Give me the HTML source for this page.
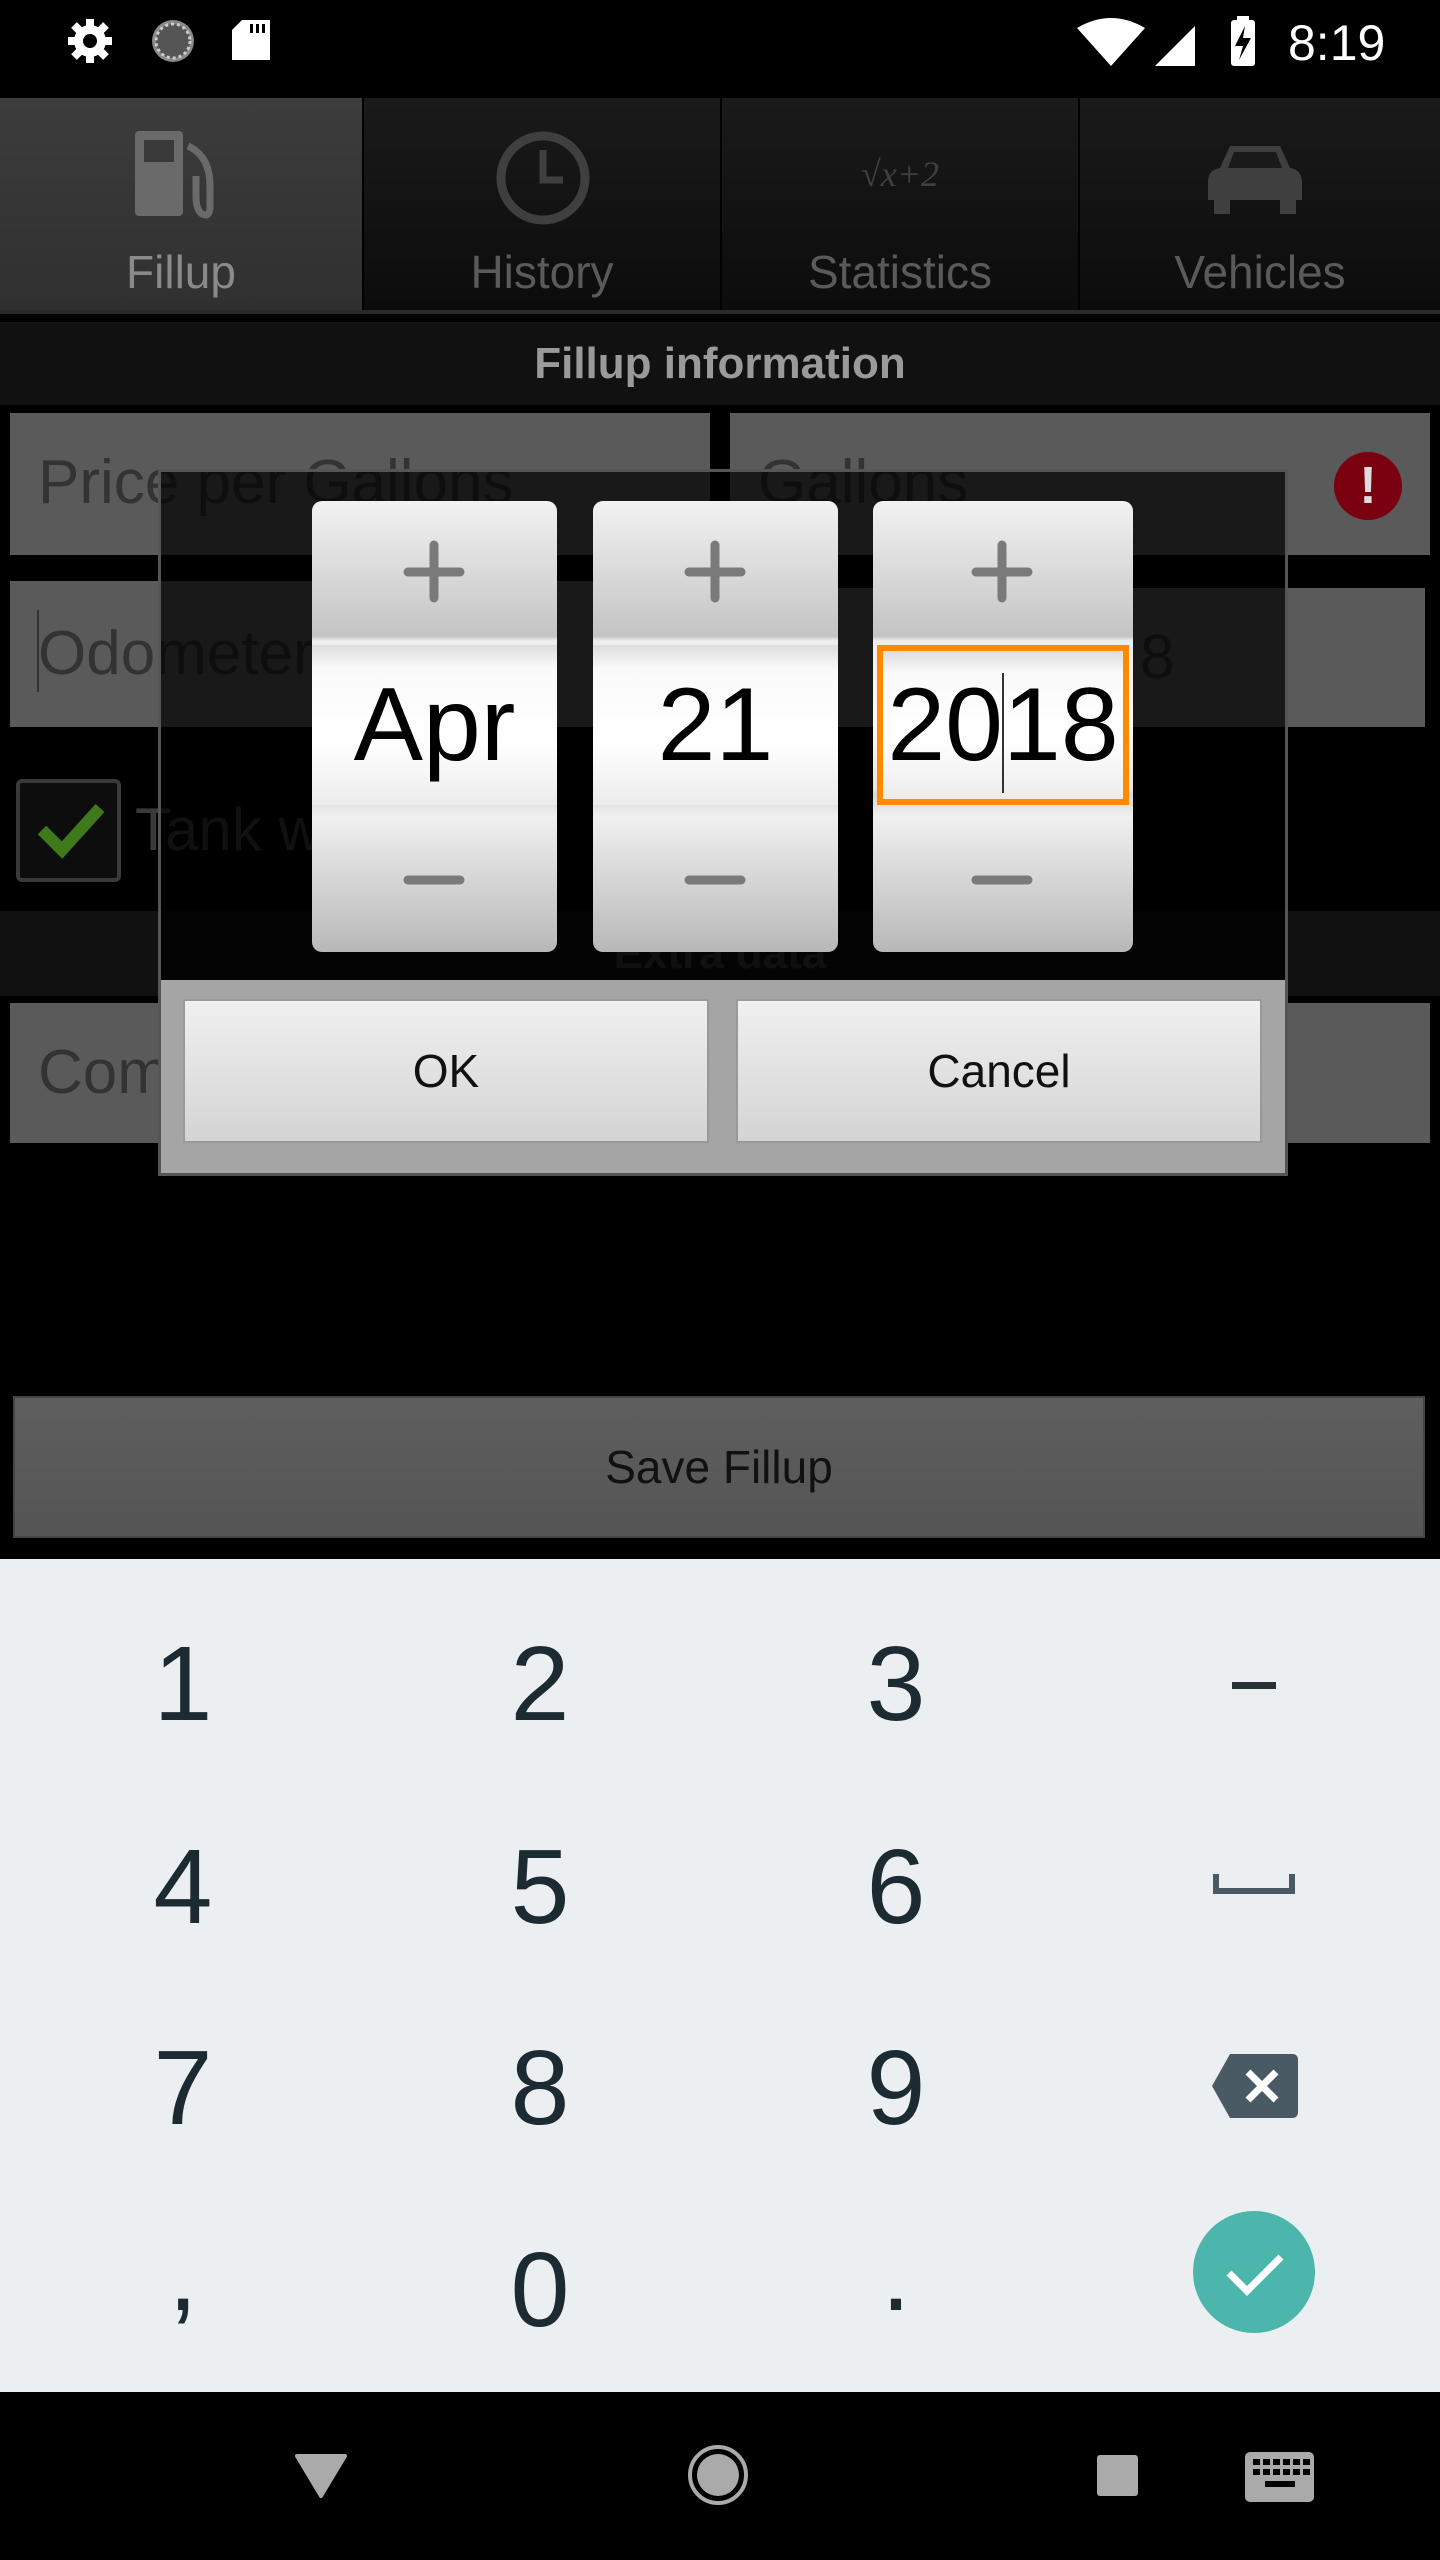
<!DOCTYPE html>
<html><head><meta charset="utf-8"><style>
*{margin:0;padding:0;box-sizing:border-box}
body{width:1440px;height:2560px;background:#000;position:relative;overflow:hidden;font-family:"Liberation Sans",sans-serif}
.a{position:absolute}
.tab{position:absolute;top:98px;height:212px;width:356px;background:linear-gradient(#1a1a1a,#0c0c0c);color:#5a5a5a;font-size:46px;text-align:center}
.tab span{position:absolute;left:0;right:0;top:147px}
.fld{position:absolute;background:#5a5a5a;color:#333;font-size:62px;padding-left:28px;line-height:140px;overflow:hidden;white-space:nowrap}
.col{position:absolute;top:501px;height:451px;border-radius:10px;background:linear-gradient(#f2f2f2,#c4c4c4 30%,#eee 31%,#fafafa 50%,#e6e6e6 64%,#d8d8d8 65%,#f0f0f0 70%,#b8b8b8);overflow:hidden}
.pl{position:absolute;left:0;right:0;top:0;height:144px}
.val{position:absolute;left:0;right:0;top:144px;height:160px;background:linear-gradient(#ddd,#fafafa 15%,#fff 60%,#ececec);text-align:center;font-size:104px;line-height:160px;color:#000}
.btn{position:absolute;top:999px;height:144px;width:526px;background:linear-gradient(#f0f0f0,#d4d4d4);border:2px solid #999;text-align:center;line-height:140px;font-size:46px;color:#111}
.k{position:absolute;width:200px;margin-left:-100px;text-align:center;font-size:106px;color:#1c2a32;font-family:"Liberation Sans",sans-serif}
</style></head><body>
<svg class="a" style="left:60px;top:14px" width="240" height="60" viewBox="0 0 240 60">
<g fill="#fff"><circle cx="30" cy="27" r="16"/><g stroke="#fff" stroke-width="8"><line x1="30" y1="5" x2="30" y2="49"/><line x1="8" y1="27" x2="52" y2="27"/><line x1="14" y1="11" x2="46" y2="43"/><line x1="46" y1="11" x2="14" y2="43"/></g><circle cx="30" cy="27" r="7" fill="#000"/></g>
<circle cx="113" cy="27" r="21" fill="#888"/><circle cx="113" cy="27" r="17" fill="#555" stroke="#ccc" stroke-width="3" stroke-dasharray="3 3"/>
<path d="M182 6h28v40h-38v-30z" fill="#fff"/><rect x="190" y="10" width="3" height="9" fill="#000"/><rect x="196" y="10" width="3" height="9" fill="#000"/><rect x="202" y="10" width="3" height="9" fill="#000"/>
</svg>
<svg class="a" style="left:1075px;top:14px" width="210" height="60" viewBox="0 0 210 60">
<path d="M2 14 Q36 -6 70 14 L36 52 Z" fill="#fff"/><path d="M80 52 L120 12 V52 Z" fill="#fff"/>
<rect x="156" y="6" width="24" height="46" rx="3" fill="#fff"/><rect x="162" y="2" width="12" height="6" fill="#fff"/><path d="M170 12 L160 32 H168 L164 46 L176 24 H168 Z" fill="#000"/>
</svg>
<div class="a" style="left:1288px;top:14px;font-size:50px;color:#fff">8:19</div>
<div class="tab" style="left:0;width:362px;background:linear-gradient(#3c3c3c,#303030);color:#8a8a8a"><span>Fillup</span>
<svg class="a" style="left:130px;top:28px" width="110" height="100"><rect x="5" y="5" width="48" height="85" rx="4" fill="#6a6a6a"/><rect x="14" y="14" width="30" height="22" fill="#3a3a3a"/><path d="M58 20 Q80 30 80 60 V80 Q80 92 72 88 Q66 84 66 70 V50" stroke="#6a6a6a" stroke-width="7" fill="none"/></svg></div>
<div class="tab" style="left:364px"><span>History</span><svg class="a" style="left:125px;top:30px" width="110" height="100"><circle cx="54" cy="50" r="42" stroke="#3f3f3f" stroke-width="9" fill="none"/><path d="M54 22 V52 H74" stroke="#3f3f3f" stroke-width="7" fill="none"/></svg></div>
<div class="tab" style="left:722px"><span>Statistics</span><div class="a" style="left:0;right:0;top:55px;font-family:'Liberation Serif',serif;font-size:36px;font-style:italic;color:#3f3f3f">√x+2</div></div>
<div class="tab" style="left:1080px;width:360px"><span>Vehicles</span><svg class="a" style="left:120px;top:40px" width="110" height="80"><path d="M20 30 L30 8 H80 L90 30 Q102 32 102 44 V62 H8 V44 Q8 32 20 30Z" fill="#3f3f3f"/><rect x="14" y="58" width="16" height="18" fill="#3f3f3f"/><rect x="80" y="58" width="16" height="18" fill="#3f3f3f"/><path d="M34 14 H76 L82 30 H28Z" fill="#1a1a1a"/></svg></div>
<div class="a" style="left:0;top:310px;width:1440px;height:4px;background:#2a2a2a"></div>
<div class="a" style="left:0;top:322px;width:1440px;height:83px;background:#111;color:#9a9a9a;font-weight:bold;font-size:44px;text-align:center;line-height:83px">Fillup information</div>
<div class="fld" style="left:10px;top:413px;width:700px;height:142px">Price per Gallons</div>
<div class="fld" style="left:730px;top:413px;width:700px;height:142px">Gallons</div>
<div class="a" style="left:1334px;top:452px;width:68px;height:68px;border-radius:50%;background:#7a0010;color:#ddd;font-size:52px;font-weight:bold;text-align:center;line-height:68px">!</div>
<div class="fld" style="left:10px;top:581px;width:700px;height:146px;line-height:146px">Odometer</div>
<div class="a" style="left:37px;top:610px;width:2px;height:82px;background:#333"></div>
<div class="fld" style="left:730px;top:588px;width:695px;height:139px;padding-left:410px">8</div>
<div class="a" style="left:16px;top:779px;width:105px;height:103px;border:4px solid #3a3a3a;border-radius:6px;background:#0d0d0d"></div>
<svg class="a" style="left:36px;top:800px" width="70" height="60"><path d="M6 30 L26 50 L64 8" stroke="#3f7a1a" stroke-width="12" fill="none"/></svg>
<div class="a" style="left:135px;top:795px;font-size:60px;color:#3a3a3a">Tank was filled</div>
<div class="a" style="left:0;top:911px;width:1440px;height:85px;background:#111;color:#3a3a3a;font-weight:bold;font-size:44px;text-align:center;line-height:85px">Extra data</div>
<div class="fld" style="left:10px;top:1003px;width:1420px;height:140px">Comments</div>
<div class="a" style="left:158px;top:469px;width:1130px;height:707px;background:rgba(0,0,0,0.72);border:3px solid #555"></div>
<div class="a" style="left:161px;top:980px;width:1124px;height:193px;background:#a5a5a5"></div>
<div class="col" style="left:312px;width:245px"><div class="pl"></div><div class="val">Apr</div></div>
<div class="col" style="left:593px;width:245px"><div class="pl"></div><div class="val">21</div></div>
<div class="col" style="left:873px;width:260px"><div class="pl"></div><div class="val" style="border:6px solid #ff8a00;left:4px;right:4px;line-height:148px">20<span style="display:inline-block;width:2px;height:120px;background:#333;vertical-align:middle;margin:0 -1px"></span>18</div></div>
<svg class="a" style="left:0;top:0" width="1440" height="1000">
<g stroke="#7a7a7a" stroke-width="9" stroke-linecap="round"><line x1="434" y1="545" x2="434" y2="598"/><line x1="408" y1="572" x2="460" y2="572"/><line x1="715" y1="545" x2="715" y2="598"/><line x1="689" y1="572" x2="741" y2="572"/><line x1="1002" y1="545" x2="1002" y2="598"/><line x1="976" y1="572" x2="1028" y2="572"/>
<line x1="408" y1="880" x2="460" y2="880"/><line x1="689" y1="880" x2="741" y2="880"/><line x1="976" y1="880" x2="1028" y2="880"/></g></svg>
<div class="btn" style="left:183px">OK</div>
<div class="btn" style="left:736px">Cancel</div>
<div class="a" style="left:13px;top:1396px;width:1412px;height:142px;background:linear-gradient(#5e5e5e,#555);border:2px solid #444;text-align:center;line-height:138px;font-size:46px;color:#111">Save Fillup</div>
<div class="a" style="left:0;top:1559px;width:1440px;height:833px;background:#eceff1"></div>
<div class="k" style="left:183px;top:1624px">1</div><div class="k" style="left:540px;top:1624px">2</div><div class="k" style="left:896px;top:1624px">3</div>
<div class="a" style="left:1232px;top:1682px;width:44px;height:7px;background:#263238"></div>
<div class="k" style="left:183px;top:1827px">4</div><div class="k" style="left:540px;top:1827px">5</div><div class="k" style="left:896px;top:1827px">6</div>
<svg class="a" style="left:1213px;top:1872px" width="82" height="24"><path d="M3 2 V19 H79 V2" stroke="#4a5a64" stroke-width="6" fill="none"/></svg>
<div class="k" style="left:183px;top:2028px">7</div><div class="k" style="left:540px;top:2028px">8</div><div class="k" style="left:896px;top:2028px">9</div>
<svg class="a" style="left:1210px;top:2052px" width="90" height="70"><path d="M20 2 H82 Q88 2 88 8 V60 Q88 66 82 66 H20 L2 34 Z" fill="#4a5a64"/><path d="M38 20 L66 48 M66 20 L38 48" stroke="#fff" stroke-width="7"/></svg>
<div class="k" style="left:183px;top:2214px">,</div><div class="k" style="left:540px;top:2230px">0</div><div class="k" style="left:896px;top:2214px">.</div>
<div class="a" style="left:1193px;top:2211px;width:122px;height:122px;border-radius:50%;background:#4db6ac"></div>
<svg class="a" style="left:1193px;top:2211px" width="122" height="122"><path d="M36 62 L54 80 L88 46" stroke="#fff" stroke-width="7" fill="none"/></svg>
<svg class="a" style="left:0;top:2392px" width="1440" height="168">
<path d="M297 64 H345 L321 104 Z" fill="#aaa" stroke="#aaa" stroke-width="4" stroke-linejoin="round"/>
<circle cx="718" cy="83" r="28" fill="none" stroke="#aaa" stroke-width="4"/><circle cx="718" cy="83" r="21" fill="#aaa"/>
<rect x="1097" y="63" width="41" height="41" rx="3" fill="#aaa"/>
<rect x="1245" y="60" width="69" height="50" rx="5" fill="#aaa"/>
<g fill="#000"><rect x="1253" y="67" width="7" height="6"/><rect x="1263" y="67" width="7" height="6"/><rect x="1273" y="67" width="7" height="6"/><rect x="1283" y="67" width="7" height="6"/><rect x="1293" y="67" width="7" height="6"/><rect x="1303" y="67" width="7" height="6"/><rect x="1253" y="77" width="7" height="6"/><rect x="1263" y="77" width="7" height="6"/><rect x="1273" y="77" width="7" height="6"/><rect x="1283" y="77" width="7" height="6"/><rect x="1293" y="77" width="7" height="6"/><rect x="1303" y="77" width="7" height="6"/><rect x="1265" y="89" width="30" height="6"/></g>
</svg>
</body></html>
